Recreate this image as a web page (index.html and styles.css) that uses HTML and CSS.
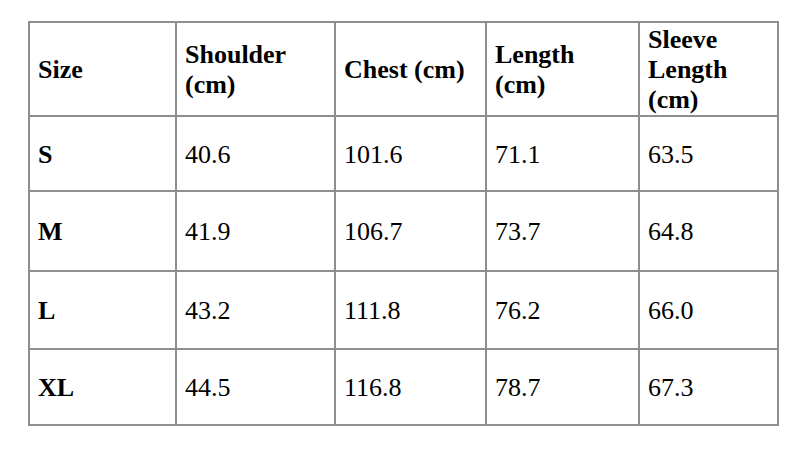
FILE: index.html
```html
<!DOCTYPE html>
<html lang="en">
<head>
<meta charset="utf-8">
<title>Size Chart</title>
<link rel="stylesheet" href="styles.css">
</head>
<body>
<div class="wrap">
<table class="size-table">
  <colgroup>
    <col class="c1"><col class="c2"><col class="c3"><col class="c4"><col class="c5">
  </colgroup>
  <thead>
    <tr class="r-head">
      <th>Size</th>
      <th>Shoulder (cm)</th>
      <th>Chest (cm)</th>
      <th>Length (cm)</th>
      <th>Sleeve Length (cm)</th>
    </tr>
  </thead>
  <tbody>
    <tr class="r-s"><td class="size">S</td><td>40.6</td><td>101.6</td><td>71.1</td><td>63.5</td></tr>
    <tr class="r-m"><td class="size">M</td><td>41.9</td><td>106.7</td><td>73.7</td><td>64.8</td></tr>
    <tr class="r-l"><td class="size">L</td><td>43.2</td><td>111.8</td><td>76.2</td><td>66.0</td></tr>
    <tr class="r-xl"><td class="size">XL</td><td>44.5</td><td>116.8</td><td>78.7</td><td>67.3</td></tr>
  </tbody>
</table>
</div>
</body>
</html>
```
FILE: styles.css
```css
html, body {
  margin: 0;
  padding: 0;
  background: #ffffff;
}
.wrap {
  padding: 21px 0 0 28px;
}
.size-table {
  border-collapse: collapse;
  table-layout: fixed;
  width: 751px;
  font-family: "Liberation Serif", "Times New Roman", serif;
  font-size: 26px;
  line-height: normal;
  color: #000;
}
.c1 { width: 147px; }
.c2 { width: 159px; }
.c3 { width: 151px; }
.c4 { width: 153px; }
.c5 { width: 139px; }
.size-table th,
.size-table td {
  border: 2px solid #8e8e8e;
  padding: 2px 12px 0 8px;
  text-align: left;
  vertical-align: middle;
}
.size-table th {
  font-weight: bold;
}
.size-table td {
  font-weight: normal;
}
.size-table td.size {
  font-weight: bold;
}
.r-head { height: 91px; }
.r-s { height: 75px; }
.r-m { height: 80px; }
.r-l { height: 78px; }
.r-xl { height: 76px; }
```
